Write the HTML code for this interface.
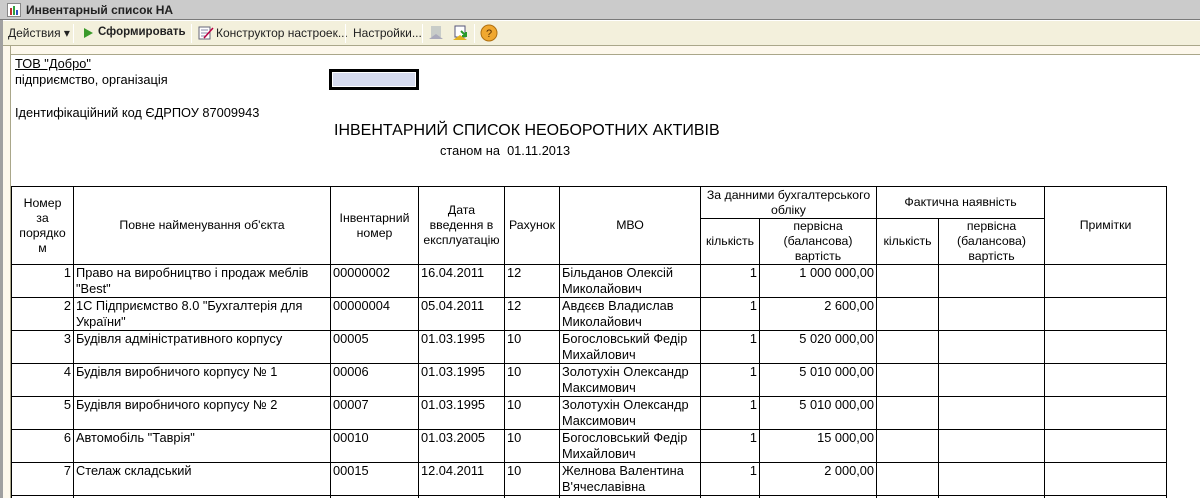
<!DOCTYPE html>
<html><head><meta charset="utf-8"><style>
*{margin:0;padding:0;box-sizing:border-box}
html,body{width:1200px;height:498px;overflow:hidden}
body{background:#fff;font-family:"Liberation Sans",Arial,sans-serif;font-size:12.8px;color:#000;position:relative}
.abs{position:absolute}
#title{left:0;top:0;width:1200px;height:20px;background:#cbcbcb;border-bottom:1px solid #7a7a7a}
#title span{position:absolute;left:26px;top:3px;font-weight:bold;font-size:12px;color:#222}
#tb{left:0;top:21px;width:1200px;height:25px;background:#f3f0dc;border-bottom:1px solid #aaa78a}
#strip{left:0;top:46px;width:1200px;height:9px;background:#fdf8ec;border-bottom:1px solid #aaa78a}
#lbar{left:0;top:20px;width:3px;height:478px;background:#a0a0a0}
#lpane{left:3px;top:46px;width:8px;height:452px;background:#fdf8ec;border-right:1px solid #aaa78a}
.ti{position:absolute;top:5px;font-size:12px;color:#222}
.sep{position:absolute;top:3px;width:1px;height:19px;background:#d6d2b8;border-right:1px solid #fff}
table{position:absolute;left:11px;top:186px;border-collapse:collapse;table-layout:fixed;width:1156px}
td{border:1px solid #000;vertical-align:top;padding:0 2px 0 2px;line-height:16px;font-size:12.8px;overflow:hidden;white-space:nowrap}
tr.r td{height:33px}
.h td{text-align:center;vertical-align:middle;line-height:15px;padding:0 1px;font-size:12.3px}
.n{text-align:right}
.vl{position:absolute;top:494px;width:1px;height:4px;background:#000}
</style></head><body>
<div id="title" class="abs">
<svg style="position:absolute;left:7px;top:3px" width="14" height="14"><rect x="0.5" y="0.5" width="13" height="13" fill="#fff" stroke="#888"/><rect x="3" y="5" width="2" height="7" fill="#c03030"/><rect x="6" y="3" width="2" height="9" fill="#30a040"/><rect x="9" y="7" width="2" height="5" fill="#3050c0"/></svg>
<span>Инвентарный список НА</span></div>
<div id="tb" class="abs">
<span class="ti" style="left:8px">Действия ▾</span>
<div class="sep" style="left:73px"></div>
<svg style="position:absolute;left:82px;top:6px" width="12" height="12"><path d="M2 1 L11 6 L2 11Z" fill="#3a9a2a"/></svg>
<span class="ti" style="left:98px;font-weight:bold;font-size:11.5px">Сформировать</span>
<div class="sep" style="left:191px"></div>
<svg style="position:absolute;left:198px;top:4px" width="16" height="16"><rect x="1" y="2" width="11" height="12" fill="#fff" stroke="#667"/><path d="M3 5h7M3 8h7M3 11h5" stroke="#88a"/><path d="M6 13 L15 3" stroke="#b04" stroke-width="1.5"/></svg>
<span class="ti" style="left:216px">Конструктор настроек...</span>
<div class="sep" style="left:345px"></div>
<span class="ti" style="left:353px">Настройки...</span>
<div class="sep" style="left:422px"></div>
<svg style="position:absolute;left:428px;top:4px" width="16" height="16"><rect x="3" y="1" width="10" height="11" fill="#c8ccc8"/><path d="M1 14 L8 9 L15 14Z" fill="#aab"/></svg>
<svg style="position:absolute;left:452px;top:4px" width="16" height="16"><rect x="3" y="1" width="10" height="11" fill="#fff" stroke="#557"/><path d="M1 15 L8 10 L15 15Z" fill="#e0b020"/><path d="M9 6 L14 11 M14 7 V11 H10" stroke="#2a9a2a" stroke-width="2" fill="none"/></svg>
<div class="sep" style="left:474px"></div>
<svg style="position:absolute;left:480px;top:3px" width="18" height="18"><circle cx="9" cy="9" r="8" fill="#f0a830" stroke="#b07010"/><text x="9" y="13" font-size="11" text-anchor="middle" fill="#5a3000" font-family="Liberation Sans">?</text></svg>
</div>
<div id="strip" class="abs"></div>
<div id="lbar" class="abs"></div>
<div id="lpane" class="abs"></div>

<div class="abs" style="left:15px;top:56px;text-decoration:underline">ТОВ "Добро"</div>
<div class="abs" style="left:15px;top:72px">підприємство, організація</div>
<div class="abs" style="left:329px;top:69px;width:90px;height:21px;border:3px solid #000;background:#d6dbee;outline:1px solid #fff;outline-offset:-4px"></div>
<div class="abs" style="left:15px;top:105px">Ідентифікаційний код ЄДРПОУ 87009943</div>
<div class="abs" style="left:334px;top:122px;font-size:16px">ІНВЕНТАРНИЙ СПИСОК НЕОБОРОТНИХ АКТИВІВ</div>
<div class="abs" style="left:440px;top:143px">станом на&nbsp; 01.11.2013</div>

<table>
<colgroup><col style="width:62px"><col style="width:257px"><col style="width:88px"><col style="width:86px"><col style="width:55px"><col style="width:141px"><col style="width:59px"><col style="width:117px"><col style="width:62px"><col style="width:106px"><col style="width:122px"></colgroup>
<tr class="h" style="height:32px"><td rowspan="2">Номер<br>за<br>порядко<br>м</td><td rowspan="2">Повне найменування об'єкта</td><td rowspan="2">Інвентарний<br>номер</td><td rowspan="2">Дата<br>введення в<br>експлуатацію</td><td rowspan="2">Рахунок</td><td rowspan="2">МВО</td><td colspan="2">За данними бухгалтерського<br>обліку</td><td colspan="2">Фактична наявність</td><td rowspan="2">Примітки</td></tr>
<tr class="h" style="height:45px"><td>кількість</td><td>первісна<br>(балансова)<br>вартість</td><td>кількість</td><td>первісна<br>(балансова)<br>вартість</td></tr>
<tr class="r"><td class="n">1</td><td>Право на виробництво і продаж меблів<br>"Best"</td><td>00000002</td><td>16.04.2011</td><td>12</td><td>Більданов Олексій<br>Миколайович</td><td class="n">1</td><td class="n">1 000 000,00</td><td></td><td></td><td></td></tr>
<tr class="r"><td class="n">2</td><td>1С Підприємство 8.0 "Бухгалтерія для<br>України"</td><td>00000004</td><td>05.04.2011</td><td>12</td><td>Авдєєв Владислав<br>Миколайович</td><td class="n">1</td><td class="n">2 600,00</td><td></td><td></td><td></td></tr>
<tr class="r"><td class="n">3</td><td>Будівля адміністративного корпусу</td><td>00005</td><td>01.03.1995</td><td>10</td><td>Богословський Федір<br>Михайлович</td><td class="n">1</td><td class="n">5 020 000,00</td><td></td><td></td><td></td></tr>
<tr class="r"><td class="n">4</td><td>Будівля виробничого корпусу № 1</td><td>00006</td><td>01.03.1995</td><td>10</td><td>Золотухін Олександр<br>Максимович</td><td class="n">1</td><td class="n">5 010 000,00</td><td></td><td></td><td></td></tr>
<tr class="r"><td class="n">5</td><td>Будівля виробничого корпусу № 2</td><td>00007</td><td>01.03.1995</td><td>10</td><td>Золотухін Олександр<br>Максимович</td><td class="n">1</td><td class="n">5 010 000,00</td><td></td><td></td><td></td></tr>
<tr class="r"><td class="n">6</td><td>Автомобіль "Таврія"</td><td>00010</td><td>01.03.2005</td><td>10</td><td>Богословський Федір<br>Михайлович</td><td class="n">1</td><td class="n">15 000,00</td><td></td><td></td><td></td></tr>
<tr class="r"><td class="n">7</td><td>Стелаж складський</td><td>00015</td><td>12.04.2011</td><td>10</td><td>Желнова Валентина<br>В'ячеславівна</td><td class="n">1</td><td class="n">2 000,00</td><td></td><td></td><td></td></tr>
</table>
<div class="vl" style="left:11px"></div><div class="vl" style="left:73px"></div><div class="vl" style="left:330px"></div><div class="vl" style="left:418px"></div><div class="vl" style="left:504px"></div><div class="vl" style="left:559px"></div><div class="vl" style="left:700px"></div><div class="vl" style="left:759px"></div><div class="vl" style="left:876px"></div><div class="vl" style="left:938px"></div><div class="vl" style="left:1044px"></div><div class="vl" style="left:1166px"></div>
</body></html>
